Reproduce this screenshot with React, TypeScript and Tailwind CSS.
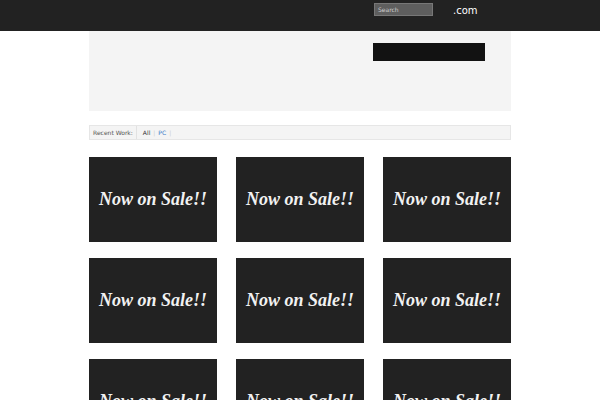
const cards = Array.from({ length: 9 }, (_, i) => i);

export default function App() {
  return (
    <div className="h-[400px] w-[600px] overflow-hidden bg-white font-['DejaVu_Sans',sans-serif]">
      {/* Header */}
      <div className="h-[31px] bg-[#222222]">
        <div className="ml-[374px] flex items-start pt-[3px]">
          <div className="flex h-[13px] w-[59px] items-center border border-[#777] bg-[#5e5e5e] pl-[3px] text-[6px] text-[#cfcfcf]">
            Search
          </div>
          <span className="ml-[20px] mt-[3px] text-[10px] leading-none text-white">.com</span>
        </div>
      </div>

      {/* Intro box */}
      <div className="mx-[89px] h-[80px] bg-[#f4f4f4] pt-[12px]">
        <div className="ml-[284px] h-[18px] w-[112px] bg-[#121212]" />
      </div>

      {/* Filter bar */}
      <div className="mx-[89px] mt-[14px] flex h-[15px] items-center border border-[#e6e6e6] bg-[#f4f4f4] text-[6px] leading-none">
        <span className="flex h-full items-center border-r border-[#e2e2e2] px-[3px] text-[#555]">Recent Work:</span>
        <span className="ml-[6px] text-[#333]">All</span>
        <span className="mx-[3px] text-[#ccc]">|</span>
        <span className="text-[#3a7bc8]">PC</span>
        <span className="mx-[3px] text-[#ccc]">|</span>
      </div>

      {/* Grid */}
      <div className="mx-[89px] mt-[17px] grid grid-cols-3 gap-x-[19px] gap-y-[16px]">
        {cards.map((i) => (
          <div
            key={i}
            className="flex h-[85px] w-[128px] items-center justify-center bg-[#222222]"
          >
            <span className="font-['Liberation_Serif',serif] text-[18px] font-bold italic text-[#f2f2f2]">
              Now on Sale!!
            </span>
          </div>
        ))}
      </div>
    </div>
  );
}
